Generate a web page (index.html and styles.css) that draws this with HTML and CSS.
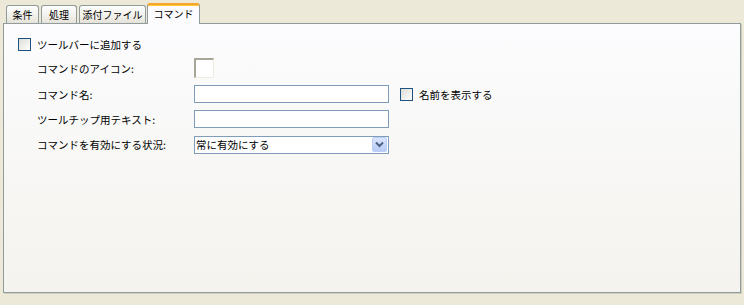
FILE: index.html
```html
<!DOCTYPE html>
<html>
<head>
    <title>コマンド</title>
    <link rel="stylesheet" href="styles.css">
</head>
<body>
    <div class="tab-strip">
        <div class="tab tab-conditions">条件</div>
        <div class="tab tab-actions">処理</div>
        <div class="tab tab-attachments">添付ファイル</div>
        <div class="tab tab-active">コマンド</div>
    </div>

    <div class="tab-panel">
        <label class="check-row">
            <span class="checkbox"></span>
            <span>ツールバーに追加する</span>
        </label>

        <div class="form-grid">
            <div class="field-label">コマンドのアイコン:</div>
            <div class="field"><span class="icon-well"></span></div>
            <div></div>

            <div class="field-label">コマンド名:</div>
            <div class="field"><span class="text-box"></span></div>
            <label class="check-row check-inline">
                <span class="checkbox"></span>
                <span>名前を表示する</span>
            </label>

            <div class="field-label">ツールチップ用テキスト:</div>
            <div class="field"><span class="text-box"></span></div>
            <div></div>

            <div class="field-label">コマンドを有効にする状況:</div>
            <div class="field">
                <div class="combo">
                    <span class="combo-text">常に有効にする</span>
                    <span class="combo-button">
                        <svg width="9" height="7" viewBox="0 0 9 7">
                            <path d="M1 1.5 L4.5 5 L8 1.5" fill="none" stroke="#4d6185" stroke-width="2"/>
                        </svg>
                    </span>
                </div>
            </div>
            <div></div>
        </div>
    </div>
</body>
</html>
```

FILE: styles.css
```css
body {
    margin: 0;
    background-color: #ece9d8;
    font-family: "Noto Sans CJK JP", "DejaVu Sans", sans-serif;
    font-size: 10.5px;
    color: #000;
    height: 305px;
    overflow: hidden;
}

.tab-strip {
    display: flex;
    align-items: flex-end;
    padding: 3px 0 0 6px;
    height: 20px;
}

.tab {
    box-sizing: border-box;
    height: 18px;
    line-height: 17px;
    margin-right: 2px;
    border: 1px solid #919b9c;
    border-bottom: none;
    border-radius: 3px 3px 0 0;
    background: linear-gradient(#fefefe, #f0efe9 60%, #e4e2d8);
    font-size: 10px;
    text-align: center;
    white-space: nowrap;
}

.tab-conditions { width: 33px; }
.tab-actions { width: 36px; }
.tab-attachments { width: 67px; }

.tab-active {
    position: relative; /* sits over the panel border */
    z-index: 1;
    width: 53px;
    height: 21px;
    line-height: 18px;
    margin-left: -1px;
    margin-bottom: -1px;
    background: #fcfcfe;
    border-top: 2px solid #f5a42c;
    box-shadow: inset 0 1px 0 #ffc73c;
}

.tab-panel {
    margin: 0 3px;
    height: 254px;
    border: 1px solid #919b9c;
    background: linear-gradient(#fcfcfe, #f4f3ee);
    box-shadow: 1px 1px 0 #d0cebf;
    padding: 14px 0 0 14px;
}

.check-row {
    display: flex;
    align-items: center;
    gap: 6px;
    height: 13px;
}

.checkbox {
    width: 11px;
    height: 11px;
    border: 1px solid #1c5180;
    background: linear-gradient(135deg, #dcdcd7, #ffffff);
    flex-shrink: 0;
}

.form-grid {
    display: grid;
    grid-template-columns: 157px 195px auto;
    grid-template-rows: 20px 18px 18px 18px;
    row-gap: 7px;
    margin: 7px 0 0 19px;
}

.form-grid > div:nth-child(10),
.form-grid > div:nth-child(11),
.form-grid > div:nth-child(12) {
    margin-top: 1px;
}

.field-label {
    display: flex;
    align-items: center;
    white-space: nowrap;
}

.field {
    display: flex;
    align-items: center;
}

.icon-well {
    width: 17px;
    height: 17px;
    border-top: 2px solid #a7a697;
    border-left: 2px solid #a7a697;
    border-right: 1px solid #eeece0;
    border-bottom: 1px solid #eeece0;
    background: #fff;
}

.text-box {
    width: 193px;
    height: 16px;
    border: 1px solid #7f9db9;
    background: #fff;
}

.check-inline {
    height: 18px;
    margin-left: 11px;
}

.combo {
    display: flex;
    align-items: center;
    justify-content: space-between;
    width: 193px;
    height: 16px;
    border: 1px solid #7f9db9;
    background: #fff;
}

.combo-text {
    padding-left: 1px;
    line-height: 16px;
}

.combo-button {
    display: flex;
    align-items: center;
    justify-content: center;
    width: 13px;
    height: 13px;
    margin-right: 1px;
    border: 1px solid #bccdf7;
    border-radius: 2px;
    background: linear-gradient(#dbe6fe, #b7cbf6);
}
```
